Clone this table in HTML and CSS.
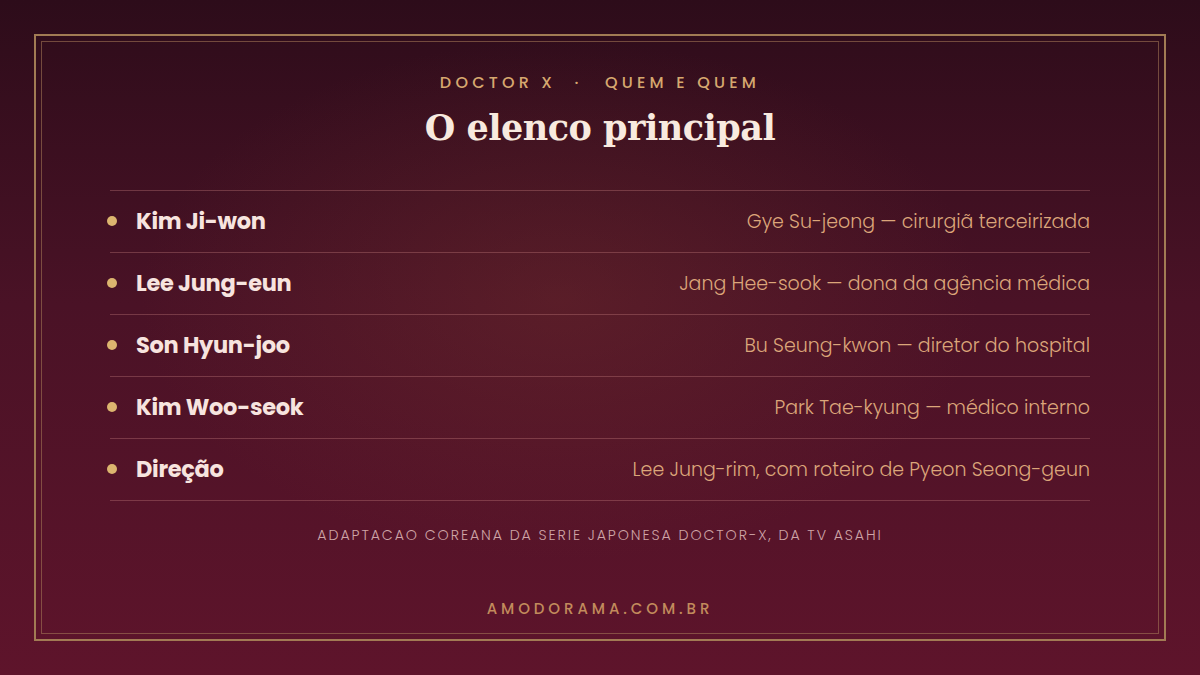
FILE: index.html
```html
<!DOCTYPE html>
<html lang="pt-BR">
<head>
  <meta charset="UTF-8">
  <meta name="viewport" content="width=device-width, initial-scale=1.0">
  <title>Doctor X — O elenco principal</title>
  <link rel="stylesheet" href="styles.css">
</head>
<body>

  <div class="frame">
    <div class="inner">
      <p class="kicker">Doctor X <span class="dot">·</span> Quem e quem</p>
      <h1>O elenco principal</h1>

      <ul class="cast">
        <li>
          <span class="name">Kim Ji-won</span>
          <span class="role">Gye Su-jeong — cirurgiã terceirizada</span>
        </li>
        <li>
          <span class="name">Lee Jung-eun</span>
          <span class="role">Jang Hee-sook — dona da agência médica</span>
        </li>
        <li>
          <span class="name">Son Hyun-joo</span>
          <span class="role">Bu Seung-kwon — diretor do hospital</span>
        </li>
        <li>
          <span class="name">Kim Woo-seok</span>
          <span class="role">Park Tae-kyung — médico interno</span>
        </li>
        <li>
          <span class="name">Direção</span>
          <span class="role">Lee Jung-rim, com roteiro de Pyeon Seong-geun</span>
        </li>
      </ul>

      <p class="note">Adaptacao coreana da serie japonesa Doctor-X, da TV Asahi</p>

      <p class="site">amodorama.com.br</p>
    </div>
  </div>

</body>
</html>
```

FILE: styles.css
```css
* {
  margin: 0;
  padding: 0;
  box-sizing: border-box;
}

body {
  width: 1200px;
  height: 675px;
  padding: 34px;
  font-family: "Poppins", "Open Sans", sans-serif;
  background:
    radial-gradient(ellipse 420px 260px at 560px 300px, rgba(120, 50, 45, 0.35), rgba(120, 50, 45, 0) 100%),
    linear-gradient(180deg, #2d0c1a 0%, #4a1226 45%, #5e142b 100%);
  overflow: hidden;
}

.frame {
  height: 100%;
  border: 2px solid #a27b54;
  padding: 5px;
}

.inner {
  height: 100%;
  border: 1px solid rgba(170, 125, 90, 0.55);
  display: flex;
  flex-direction: column;
  align-items: center;
  padding: 29px 68px 0;
}

.kicker {
  font-size: 16px;
  font-weight: 500;
  letter-spacing: 4.2px;
  text-transform: uppercase;
  color: #d6a86f;
  line-height: 24px;
}

.kicker .dot {
  margin: 0 14px 0 10px;
}

h1 {
  font-family: "DejaVu Serif", "Liberation Serif", serif;
  font-size: 35px;
  font-weight: bold;
  color: #f8eadf;
  line-height: 44px;
  margin-top: 11px;
  letter-spacing: -0.5px;
}

.cast {
  list-style: none;
  width: 100%;
  margin-top: 40px;
  border-top: 1px solid rgba(200, 130, 130, 0.35);
}

.cast li {
  display: flex;
  justify-content: space-between;
  align-items: center;
  height: 62px;
  border-bottom: 1px solid rgba(200, 130, 130, 0.35);
  padding-bottom: 1px;
}

.name {
  display: flex;
  align-items: center;
  font-size: 22.5px;
  font-weight: 700;
  color: #f7e4df;
  letter-spacing: -0.3px;
}

.name::before {
  content: "";
  width: 10px;
  height: 10px;
  border-radius: 50%;
  background-color: #dcb56f;
  margin: 0 19px 0 -3px;
}

.role {
  font-size: 19px;
  font-weight: 300;
  color: #dca67a;
}

.note {
  margin-top: 24px;
  font-size: 14.2px;
  font-weight: 300;
  letter-spacing: 1.9px;
  text-transform: uppercase;
  color: #cfa5a7;
}

.site {
  margin-top: auto;
  margin-bottom: 13px;
  font-size: 15px;
  font-weight: 500;
  letter-spacing: 3.9px;
  text-transform: uppercase;
  color: #c28b5c;
}
```
